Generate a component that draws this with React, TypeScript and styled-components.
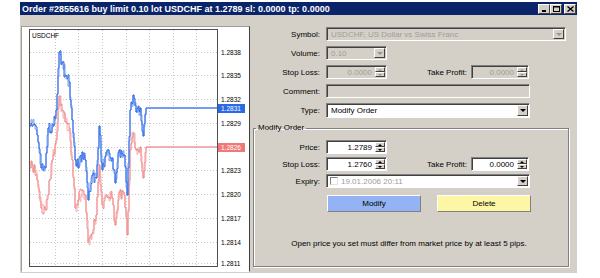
import React from "react";
import styled, { createGlobalStyle } from "styled-components";

const GlobalStyle = createGlobalStyle`
  html, body {
    margin: 0;
    padding: 0;
    background: #ffffff;
  }
  body {
    font-family: "Liberation Sans", Arial, sans-serif;
    font-size: 8px;
    color: #000;
  }
`;

type Pt = [number, number];

// rough bid / ask tick paths in page pixels
const bluePts: Pt[] = [
  [30, 126], [34, 124], [37, 135], [41, 168], [45, 168], [48, 128], [53, 126],
  [56, 110], [59, 52], [62, 62], [65, 75], [69, 82], [72, 120], [75, 160],
  [78, 168], [82, 152], [85, 160], [88, 200], [92, 175], [96, 178], [99, 126],
  [102, 170], [106, 152], [112, 158], [115, 183], [119, 150], [124, 155],
  [127, 195], [130, 110], [133, 95], [136, 112], [140, 108], [143, 136],
  [146, 108], [217, 108],
];

const redPts: Pt[] = [
  [30, 168], [34, 165], [37, 180], [41, 208], [45, 210], [48, 195], [52, 160],
  [56, 140], [59, 96], [62, 110], [65, 122], [69, 128], [72, 160], [75, 208],
  [78, 200], [82, 190], [85, 195], [88, 242], [92, 233], [96, 215], [99, 165],
  [102, 205], [106, 195], [112, 198], [115, 225], [119, 192], [124, 195],
  [127, 235], [130, 150], [133, 133], [136, 150], [140, 147], [143, 178],
  [146, 147], [217, 147],
];

function stepPath(pts: Pt[], seed: number) {
  let d = `M${pts[0][0]} ${pts[0][1]}`;
  for (let i = 1; i < pts.length; i++) {
    const [x0, y0] = pts[i - 1];
    const [x1, y1] = pts[i];
    if (x0 >= 146) {
      d += ` H${x1} V${y1}`;
      continue;
    }
    for (let x = x0 + 1; x <= x1; x++) {
      const t = (x - x0) / (x1 - x0);
      const j = Math.sin(x * 12.9898 + seed) * 43758.5453;
      const noise = (j - Math.floor(j) - 0.5) * 13;
      const y = y0 + (y1 - y0) * t + (x === x1 ? 0 : noise);
      d += ` H${x} V${y.toFixed(1)}`;
    }
  }
  return d;
}

const levels = [
  { y: 52, p: "1.2838" },
  { y: 75, p: "1.2835" },
  { y: 99, p: "1.2832" },
  { y: 123, p: "1.2829" },
  { y: 170, p: "1.2823" },
  { y: 194, p: "1.2820" },
  { y: 218, p: "1.2817" },
  { y: 242, p: "1.2814" },
  { y: 263, p: "1.2811" },
];
const gridX = [55, 78, 102, 126, 149, 173, 196];

function Chart() {
  return (
    <ChartPanel>
      <svg width="227" height="244" viewBox="22 27 227 244">
        {levels.map(l => (
          <line key={l.p} x1={30} x2={217} y1={l.y + 0.5} y2={l.y + 0.5} stroke="#c8c8c8" strokeDasharray="1 2" />
        ))}
        <line x1={30} x2={217} y1={147.5} y2={147.5} stroke="#c8c8c8" strokeDasharray="1 2" />
        {gridX.map(x => (
          <line key={x} x1={x + 0.5} x2={x + 0.5} y1={30} y2={266} stroke="#c8c8c8" strokeDasharray="1 2" />
        ))}
        <path d={stepPath(redPts, 3.1)} fill="none" stroke="#f7b0b0" strokeWidth="1" />
        <path d={stepPath(redPts, 7.7)} fill="none" stroke="#f08c8c" strokeWidth="1" />
        <path d={stepPath(bluePts, 1.3)} fill="none" stroke="#7aa4f4" strokeWidth="1" />
        <path d={stepPath(bluePts, 5.9)} fill="none" stroke="#2f6ae6" strokeWidth="1" />
        <rect x={29.5} y={29.5} width={188} height={237} fill="none" stroke="#505050" />
        <text x={32} y={38} fontSize="6.5" fill="#000" fontFamily="Liberation Sans, Arial, sans-serif">USDCHF</text>
        {levels.map(l => (
          <text key={l.p} x={221} y={l.y + 2.5} fontSize="6.5" fill="#000" fontFamily="Liberation Sans, Arial, sans-serif">
            {l.p}
          </text>
        ))}
        <rect x={218} y={104} width={27} height={9} fill="#2a6ae4" />
        <text x={221} y={111} fontSize="6.5" fill="#fff" fontFamily="Liberation Sans, Arial, sans-serif">1.2831</text>
        <rect x={218} y={143} width={27} height={9} fill="#f07878" />
        <text x={221} y={150} fontSize="6.5" fill="#fff" fontFamily="Liberation Sans, Arial, sans-serif">1.2826</text>
      </svg>
    </ChartPanel>
  );
}

function Combo({ w, h, off, text }: { w: number; h?: number; off?: boolean; text?: string }) {
  return (
    <Box $w={w} $h={h} $off={off}>
      <Value>{text}</Value>
      <DropBtn $off={off} />
    </Box>
  );
}

function SpinBox({ w, off, text }: { w: number; off?: boolean; text: string }) {
  return (
    <Box $w={w} $off={off}>
      <Value $right>{text}</Value>
      <Spin>
        <SpinHalf $up $off={off} />
        <SpinHalf $off={off} />
      </Spin>
    </Box>
  );
}

export default function App() {
  return (
    <>
      <GlobalStyle />
      <Page>
        <Window>
          <TitleBar>
            <Title>Order #2855616 buy limit 0.10 lot USDCHF at 1.2789 sl: 0.0000 tp: 0.0000</Title>
            <CapBtn>
              <svg width="7" height="6" viewBox="0 0 7 6"><rect x="1" y="4" width="4" height="2" fill="#000" /></svg>
            </CapBtn>
            <CapBtn>
              <svg width="7" height="6" viewBox="0 0 7 6"><rect x="0.5" y="0.5" width="6" height="5" fill="none" stroke="#000" /><rect x="0" y="0" width="7" height="1.5" fill="#000" /></svg>
            </CapBtn>
            <CapBtn $gap>
              <svg width="7" height="6" viewBox="0 0 7 6"><path d="M0.5 0.5 L6.5 5.5 M6.5 0.5 L0.5 5.5" stroke="#000" strokeWidth="1.4" /></svg>
            </CapBtn>
          </TitleBar>
          <Body>
            <Chart />
            <Form>
              <Row>
                <Label>Symbol:</Label>
                <Combo w={240} off text="USDCHF, US Dollar vs Swiss Franc" />
              </Row>
              <Row>
                <Label>Volume:</Label>
                <Combo w={61} off text="0.10" />
              </Row>
              <Row>
                <Label>Stop Loss:</Label>
                <SpinBox w={61} off text="0.0000" />
                <SideLabel>Take Profit:</SideLabel>
                <SpinBox w={58} off text="0.0000" />
              </Row>
              <Row>
                <Label>Comment:</Label>
                <Box $w={204} $off />
              </Row>
              <Row $h={15}>
                <Label>Type:</Label>
                <Combo w={204} h={15} text="Modify Order" />
              </Row>
              <Group>
                <Legend>Modify Order</Legend>
                <GroupRows>
                  <Row>
                    <Label $w={66}>Price:</Label>
                    <SpinBox w={61} text="1.2789" />
                  </Row>
                  <Row>
                    <Label $w={66}>Stop Loss:</Label>
                    <SpinBox w={61} text="1.2760" />
                    <SideLabel>Take Profit:</SideLabel>
                    <SpinBox w={58} text="0.0000" />
                  </Row>
                  <Row>
                    <Label $w={66}>Expiry:</Label>
                    <Box $w={204}>
                      <Check />
                      <Value $gray>19.01.2006 20:11</Value>
                      <DropBtn />
                    </Box>
                  </Row>
                </GroupRows>
                <Buttons>
                  <Action $bg="#93b3f4">Modify</Action>
                  <Action $bg="#fdf6a4">Delete</Action>
                </Buttons>
                <Note>Open price you set must differ from market price by at least 5 pips.</Note>
              </Group>
            </Form>
          </Body>
        </Window>
      </Page>
    </>
  );
}

const Page = styled.div`
  padding: 2px 0 0 20px;
`;

const Window = styled.div`
  width: 557px;
  height: 271px;
  display: flex;
  flex-direction: column;
  background: #d4d0c8;
`;

const TitleBar = styled.div`
  height: 13px;
  flex-shrink: 0;
  display: flex;
  align-items: center;
  padding: 0 1px 0 2px;
  background: #0a246a;
  color: #ffffff;
  font-weight: bold;
  font-size: 9px;
`;

const Title = styled.span`
  flex: 1;
  white-space: nowrap;
`;

const CapBtn = styled.div<{ $gap?: boolean }>`
  width: 12px;
  height: 10px;
  margin-left: ${p => (p.$gap ? "2px" : "0")};
  box-sizing: border-box;
  display: flex;
  align-items: center;
  justify-content: center;
  background: #d4d0c8;
  border: 1px solid;
  border-color: #ffffff #404040 #404040 #ffffff;
`;

const Body = styled.div`
  flex: 1;
  display: flex;
  gap: 3px;
  padding: 11px 0 0 1px;
`;

const ChartPanel = styled.div`
  width: 229px;
  height: 246px;
  box-sizing: border-box;
  background: #ffffff;
  border: 1px solid;
  border-color: #a09d96 #404040 #ffffff #a09d96;
  svg {
    display: block;
  }
`;

const Form = styled.div`
  flex: 1;
  display: flex;
  flex-direction: column;
  gap: 5px;
  padding: 1px 8px 0 0;
`;

const Row = styled.div<{ $h?: number }>`
  height: ${p => p.$h ?? 14}px;
  display: flex;
  align-items: center;
`;

const Label = styled.div<{ $w?: number }>`
  width: ${p => p.$w ?? 67}px;
  margin-right: 6px;
  text-align: right;
  white-space: nowrap;
`;

const SideLabel = styled.div`
  width: 80px;
  margin-right: 4px;
  text-align: right;
  white-space: nowrap;
`;

const Box = styled.div<{ $w: number; $h?: number; $off?: boolean }>`
  width: ${p => p.$w}px;
  height: ${p => p.$h ?? 14}px;
  box-sizing: border-box;
  display: flex;
  align-items: center;
  padding: 1px;
  background: ${p => (p.$off ? "#d4d0c8" : "#ffffff")};
  color: ${p => (p.$off ? "#a09d96" : "#000000")};
  border: 1px solid;
  border-color: #808080 #ffffff #ffffff #808080;
  box-shadow: inset 1px 1px 0 #404040;
`;

const Value = styled.span<{ $right?: boolean; $gray?: boolean }>`
  flex: 1;
  padding: 0 3px;
  text-align: ${p => (p.$right ? "right" : "left")};
  color: ${p => (p.$gray ? "#a09d96" : "inherit")};
  white-space: nowrap;
  overflow: hidden;
`;

const DropBtn = styled.div<{ $off?: boolean }>`
  width: 11px;
  align-self: stretch;
  box-sizing: border-box;
  display: flex;
  align-items: center;
  justify-content: center;
  background: #d4d0c8;
  border: 1px solid;
  border-color: #ffffff #404040 #404040 #ffffff;
  &::after {
    content: "";
    border-left: 3px solid transparent;
    border-right: 3px solid transparent;
    border-top: 3px solid ${p => (p.$off ? "#9a978f" : "#000000")};
  }
`;

const Spin = styled.div`
  width: 10px;
  align-self: stretch;
  display: flex;
  flex-direction: column;
`;

const SpinHalf = styled.div<{ $up?: boolean; $off?: boolean }>`
  flex: 1;
  box-sizing: border-box;
  display: flex;
  align-items: center;
  justify-content: center;
  background: #d4d0c8;
  border: 1px solid;
  border-color: #ffffff #404040 #404040 #ffffff;
  &::after {
    content: "";
    border-left: 2px solid transparent;
    border-right: 2px solid transparent;
    ${p => (p.$up ? "border-bottom" : "border-top")}: 2px solid ${p => (p.$off ? "#9a978f" : "#000000")};
  }
`;

const Check = styled.div`
  width: 8px;
  height: 8px;
  margin-left: 2px;
  box-sizing: border-box;
  background: #ffffff;
  border: 1px solid;
  border-color: #808080 #e0e0e0 #e0e0e0 #808080;
`;

const Group = styled.fieldset`
  margin: 0;
  padding: 0;
  height: 144px;
  box-sizing: border-box;
  border: 1px solid #808080;
  box-shadow: 1px 1px 0 #ffffff, inset 1px 1px 0 #ffffff;
  display: flex;
  flex-direction: column;
`;

const Legend = styled.legend`
  margin-left: 2px;
  padding: 0 2px;
  line-height: 10px;
`;

const GroupRows = styled.div`
  display: flex;
  flex-direction: column;
  gap: 3px;
  margin-top: 7px;
`;

const Buttons = styled.div`
  display: flex;
  gap: 16px;
  margin: 7px 0 0 73px;
`;

const Action = styled.div<{ $bg: string }>`
  width: 94px;
  height: 17px;
  box-sizing: border-box;
  display: flex;
  align-items: center;
  justify-content: center;
  background: ${p => p.$bg};
  border: 1px solid;
  border-color: #ffffff #808080 #808080 #ffffff;
`;

const Note = styled.div`
  margin-top: 27px;
  padding-right: 4px;
  text-align: center;
  white-space: nowrap;
`;
